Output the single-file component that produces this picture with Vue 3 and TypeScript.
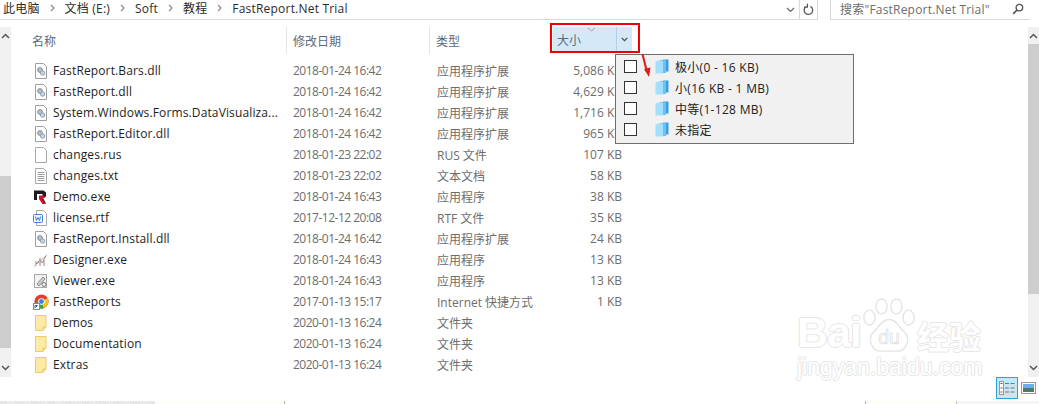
<template>
  <div class="explorer">
    <div class="topbar">
      <div class="address">
        <div class="crumbs">
          <template v-for="(c, i) in crumbs" :key="c">
            <span class="crumb">{{ c }}</span>
            <svg v-if="i < crumbs.length - 1" class="sep" width="5" height="8" viewBox="0 0 5 8"><path d="M1 1l3 3-3 3" fill="none" stroke="#8a8a8a" stroke-width="1.2" /></svg>
          </template>
        </div>
        <div class="addr-btn">
          <svg width="9" height="6" viewBox="0 0 9 6"><path d="M1 1l3.5 3.5L8 1" fill="none" stroke="#666" stroke-width="1.2" /></svg>
        </div>
        <div class="addr-btn refresh">
          <svg width="11" height="13" viewBox="0 0 11 13"><path d="M7.5 3.4A4.3 4.3 0 1 1 3 3.6M4.4 .8v3.4H1" fill="none" stroke="#555" stroke-width="1.3" /></svg>
        </div>
      </div>
      <div class="search">
        <span>搜索"FastReport.Net Trial"</span>
        <svg width="12" height="12" viewBox="0 0 12 12"><circle cx="7.4" cy="4.6" r="3.3" fill="none" stroke="#555" stroke-width="1.3" /><path d="M5 7L1.2 10.8" stroke="#555" stroke-width="1.7" /></svg>
      </div>
    </div>

    <div class="main">
      <div class="scrollbar">
        <svg width="9" height="6" viewBox="0 0 9 6"><path d="M1 5l3.5-3.5L8 5" fill="none" stroke="#555" stroke-width="1.5" /></svg>
        <div class="track"><div class="thumb left-thumb"></div></div>
        <svg width="9" height="6" viewBox="0 0 9 6"><path d="M1 1l3.5 3.5L8 1" fill="none" stroke="#555" stroke-width="1.5" /></svg>
      </div>

      <div class="list">
        <div class="head">
          <div class="col col-name">名称</div>
          <div class="col col-date">修改日期</div>
          <div class="col col-type">类型</div>
          <div class="col-size">
            <div class="size-cell">
              <svg class="sort" width="9" height="5" viewBox="0 0 9 5"><path d="M1 1l3.5 3L8 1" fill="none" stroke="#9aa7b3" /></svg>
              <span>大小</span>
              <div class="size-drop">
                <svg width="7" height="5" viewBox="0 0 7 5"><path d="M.7.8l2.8 2.8L6.3.8" fill="none" stroke="#444" stroke-width="1.1" /></svg>
              </div>
            </div>
          </div>
        </div>

        <div v-for="f in files" :key="f.name" class="row">
          <div class="name">
            <svg class="icon" width="16" height="16" viewBox="0 0 16 16">
              <template v-if="f.icon === 'dll'">
                <path d="M2.5 .5h8l3 3v12h-11z" fill="#fff" stroke="#a0a0a0" />
                <circle cx="7" cy="7" r="2.4" fill="#b8c0c8" stroke="#848c94" />
                <circle cx="9.6" cy="10" r="2.2" fill="#c9d6e4" stroke="#8ea0b2" />
              </template>
              <template v-else-if="f.icon === 'blank'">
                <path d="M2.5 .5h8l3 3v12h-11z" fill="#fff" stroke="#a8a8a8" />
              </template>
              <template v-else-if="f.icon === 'txt'">
                <path d="M2.5 .5h8l3 3v12h-11z" fill="#fff" stroke="#a8a8a8" />
                <path d="M4.5 4.5h7M4.5 6.5h7M4.5 8.5h7M4.5 10.5h7M4.5 12.5h7" stroke="#a0a0a0" />
              </template>
              <template v-else-if="f.icon === 'demo'">
                <path d="M1 1.5h9.5l2.500 2v4L10 9l3 5.5H9.5L7 10V8.5h2.5V5H4v6H1z" fill="#1c1c1c" />
                <path d="M6 6.5h5l1 2-3 1.5 4 5H9.5L6 10z" fill="#d3122a" />
              </template>
              <template v-else-if="f.icon === 'rtf'">
                <path d="M3.5 .5h7l3 3v12h-10z" fill="#fff" stroke="#a8a8a8" />
                <rect x=".5" y="4.5" width="9" height="8" rx="1" fill="#eef5ff" stroke="#3b82e0" />
                <path d="M2.5 6.5l1 4 1.5-3 1.5 3 1-4" fill="none" stroke="#3b82e0" />
              </template>
              <template v-else-if="f.icon === 'designer'">
                <path d="M1 14.5L14 3" stroke="#b0b0b0" />
                <path d="M2 14V9h2v5zM6 14V6h2v8zM10 14V8h2v6z" fill="#c4c4c4" />
                <path d="M3 12l4-4 2 3 4-7" fill="none" stroke="#c87a7a" />
              </template>
              <template v-else-if="f.icon === 'viewer'">
                <rect x="1.5" y="1.5" width="12" height="13" fill="#f2f2f2" stroke="#a8a8a8" />
                <path d="M4 11l6-7 2 2-6 7z" fill="#cfcfcf" stroke="#8a8a8a" />
                <circle cx="11" cy="11.5" r="2" fill="none" stroke="#777" />
              </template>
              <template v-else-if="f.icon === 'chrome'">
                <circle cx="8.5" cy="7.5" r="7" fill="#e23c2e" />
                <path d="M8.5 7.5L14.6 4a7 7 0 0 1-4 10z" fill="#f5c518" />
                <path d="M8.5 7.5l2 7a7 7 0 0 1-8-3.5L4 6z" fill="#2fa84f" />
                <circle cx="8.5" cy="7.5" r="3.3" fill="#fff" />
                <circle cx="8.5" cy="7.5" r="2.4" fill="#3f80e8" />
                <rect x=".5" y="9.5" width="6" height="6" fill="#fff" stroke="#8a8a8a" />
                <path d="M2 14v-2.5h2.5M4.500 11.5L2.5 13.5" fill="none" stroke="#2a5fbf" />
              </template>
              <template v-else>
                <path d="M2.5 .5h10.500v11.500l-3 3.500h-7.500z" fill="#fdeaa6" stroke="#efcd62" />
                <path d="M10 15.5V12h3" fill="#fdd96f" stroke="#efcd62" />
              </template>
            </svg>
            <span class="name-text">{{ f.name }}</span>
          </div>
          <div class="date">{{ f.date }}</div>
          <div class="type">{{ f.type }}</div>
          <div class="size">{{ f.size }}</div>
        </div>

        <div class="hilite"></div>
        <div class="popup">
          <div v-for="o in sizes" :key="o" class="opt">
            <span class="check"></span>
            <svg width="14" height="15" viewBox="0 0 14 15">
              <path d="M8 .5h5.5v12H8z" fill="#3a9fe0" />
              <path d="M5 1h6v13H5z" fill="#6cc0f2" />
              <path d="M.5 2.5Q4 1 8 2v12.5H.5z" fill="#a4e0fb" />
            </svg>
            <span class="opt-text">{{ o }}</span>
          </div>
        </div>
        <svg class="arrow" width="12" height="26" viewBox="0 0 12 26">
          <path d="M1.5 0L6 18" stroke="#e01919" stroke-width="2" />
          <path d="M3 15l6.500-1.500L8 23z" fill="#e01919" />
        </svg>
      </div>

      <div class="scrollbar">
        <svg width="9" height="6" viewBox="0 0 9 6"><path d="M1 5l3.5-3.5L8 5" fill="none" stroke="#555" stroke-width="1.5" /></svg>
        <div class="track"><div class="thumb right-thumb"></div></div>
        <svg width="9" height="6" viewBox="0 0 9 6"><path d="M1 1l3.5 3.5L8 1" fill="none" stroke="#555" stroke-width="1.5" /></svg>
      </div>
    </div>

    <div class="status">
      <div class="view active">
        <svg width="16" height="14" viewBox="0 0 16 14">
          <rect x=".5" y=".5" width="4" height="13" fill="#fff" stroke="#999" />
          <path d="M1.5 2.5h2M1.5 7h2" stroke="#555" />
          <path d="M1.5 11h2" stroke="#d22" />
          <path d="M6 2.5h4M11.5 2.5h4M6 7h4M11.5 7h4M6 11h4M11.5 11h4" stroke="#777" />
        </svg>
      </div>
      <div class="view picture">
        <svg width="15" height="12" viewBox="0 0 15 12">
          <rect x=".5" y=".5" width="14" height="11" fill="#fff" stroke="#999" />
          <rect x="2" y="2" width="11" height="4" fill="#6aaef0" />
          <path d="M2 6h11v4H2z" fill="#4d7a6c" />
        </svg>
      </div>
    </div>

    <div class="strip">
      <div class="s-hatch"></div>
      <div class="s-cream s1"></div>
      <div class="s-white"></div>
      <div class="s-cream s2"></div>
      <div class="s-grey"></div>
    </div>

    <div class="mark">
      <div class="mark-top">
        <span class="mark-bai">Bai</span>
        <svg class="paw" width="54" height="56" viewBox="0 0 58 58">
          <g fill="#fff" stroke="#e4e4e4" stroke-width="1.5">
            <ellipse cx="8" cy="20" rx="6" ry="8" />
            <ellipse cx="21" cy="8" rx="6" ry="8" />
            <ellipse cx="37" cy="8" rx="6" ry="8" />
            <ellipse cx="50" cy="20" rx="6" ry="8" />
            <path d="M29 22c8 0 11 9 17 14 6 6 2 20-8 20H20C10 56 6 42 12 36c6-5 9-14 17-14z" />
          </g>
          <text x="29" y="48" class="paw-text">du</text>
        </svg>
        <span class="mark-cn">经验</span>
      </div>
      <div class="mark-url">jingyan.baidu.com</div>
    </div>
  </div>
</template>

<script setup lang="ts">
interface FileRow {
  name: string
  date: string
  type: string
  size: string
  icon: string
}

const crumbs = ['此电脑', '文档 (E:)', 'Soft', '教程', 'FastReport.Net Trial']
const sizes = ['极小(0 - 16 KB)', '小(16 KB - 1 MB)', '中等(1-128 MB)', '未指定']

const files: FileRow[] = [
  { name: 'FastReport.Bars.dll', date: '2018-01-24 16:42', type: '应用程序扩展', size: '5,086 KB', icon: 'dll' },
  { name: 'FastReport.dll', date: '2018-01-24 16:42', type: '应用程序扩展', size: '4,629 KB', icon: 'dll' },
  { name: 'System.Windows.Forms.DataVisualiza...', date: '2018-01-24 16:42', type: '应用程序扩展', size: '1,716 KB', icon: 'dll' },
  { name: 'FastReport.Editor.dll', date: '2018-01-24 16:42', type: '应用程序扩展', size: '965 KB', icon: 'dll' },
  { name: 'changes.rus', date: '2018-01-23 22:02', type: 'RUS 文件', size: '107 KB', icon: 'blank' },
  { name: 'changes.txt', date: '2018-01-23 22:02', type: '文本文档', size: '58 KB', icon: 'txt' },
  { name: 'Demo.exe', date: '2018-01-24 16:43', type: '应用程序', size: '38 KB', icon: 'demo' },
  { name: 'license.rtf', date: '2017-12-12 20:08', type: 'RTF 文件', size: '35 KB', icon: 'rtf' },
  { name: 'FastReport.Install.dll', date: '2018-01-24 16:42', type: '应用程序扩展', size: '24 KB', icon: 'dll' },
  { name: 'Designer.exe', date: '2018-01-24 16:43', type: '应用程序', size: '13 KB', icon: 'designer' },
  { name: 'Viewer.exe', date: '2018-01-24 16:43', type: '应用程序', size: '13 KB', icon: 'viewer' },
  { name: 'FastReports', date: '2017-01-13 15:17', type: 'Internet 快捷方式', size: '1 KB', icon: 'chrome' },
  { name: 'Demos', date: '2020-01-13 16:24', type: '文件夹', size: '', icon: 'folder' },
  { name: 'Documentation', date: '2020-01-13 16:24', type: '文件夹', size: '', icon: 'folder' },
  { name: 'Extras', date: '2020-01-13 16:24', type: '文件夹', size: '', icon: 'folder' }
]
</script>

<style scoped>
.explorer {
  position: relative;
  display: flex;
  flex-direction: column;
  width: 1039px;
  height: 404px;
  overflow: hidden;
  background: #fff;
  font-family: "Open Sans", "Noto Sans CJK SC", sans-serif;
  font-size: 12px;
  color: #1e1e1e;
}
.topbar {
  display: flex;
  height: 20px;
  flex: none;
}
.address {
  display: flex;
  width: 818px;
  border-bottom: 1px solid #d9d9d9;
}
.crumbs {
  flex: 1;
  display: flex;
  align-items: center;
  gap: 10px;
  padding-left: 3px;
  padding-bottom: 3px;
  color: #2b2b2b;
  letter-spacing: 0.2px;
}
.addr-btn {
  width: 17px;
  display: flex;
  align-items: center;
  justify-content: center;
}
.refresh {
  border-left: 1px solid #d9d9d9;
  border-right: 1px solid #d9d9d9;
}
.search {
  margin-left: 12px;
  width: 200px;
  display: flex;
  align-items: center;
  justify-content: space-between;
  padding: 0 6px 2px 9px;
  box-sizing: border-box;
  border-left: 1px solid #d9d9d9;
  border-bottom: 1px solid #d9d9d9;
  color: #6d6d6d;
  letter-spacing: 0.2px;
}
.main {
  display: flex;
  margin-top: 7px;
  height: 350px;
  flex: none;
}
.scrollbar {
  width: 11px;
  flex: none;
  display: flex;
  flex-direction: column;
  align-items: center;
  background: #f0f0f0;
  padding: 6px 0;
  box-sizing: border-box;
  gap: 6px;
}
.track {
  flex: 1;
  width: 100%;
  position: relative;
}
.thumb {
  position: absolute;
  left: 0;
  right: 0;
  background: #cdcdcd;
}
.left-thumb {
  top: 131px;
  height: 172px;
}
.right-thumb {
  top: -1px;
  height: 250px;
}
.list {
  position: relative;
  flex: 1;
}
.head {
  display: flex;
  height: 28px;
  margin-bottom: 5px;
  color: #5b6b7c;
}
.col {
  height: 27px;
  display: flex;
  align-items: center;
  box-sizing: border-box;
  border-right: 1px solid #e5e5e5;
}
.col-name {
  width: 276px;
  padding-left: 21px;
}
.col-date {
  width: 143px;
  padding-left: 6px;
}
.col-type {
  width: 123px;
  padding-left: 6px;
  border-right: none;
}
.col-size {
  width: 79px;
}
.size-cell {
  position: relative;
  display: flex;
  align-items: center;
  height: 24px;
  padding-left: 4px;
  background: #d5e8f7;
  box-sizing: border-box;
}
.sort {
  position: absolute;
  left: 34px;
  top: 0;
}
.size-cell span {
  padding-top: 2px;
}
.size-drop {
  position: absolute;
  right: 0;
  top: 0;
  bottom: 0;
  width: 15px;
  display: flex;
  align-items: center;
  justify-content: center;
  border-left: 1px solid #b5cfe4;
}
.row {
  display: flex;
  height: 21px;
  align-items: center;
  color: #6d6d6d;
}
.name {
  width: 276px;
  display: flex;
  align-items: center;
  padding-left: 22px;
  box-sizing: border-box;
  color: #1e1e1e;
  gap: 4px;
  letter-spacing: 0.13px;
}
.icon {
  flex: none;
}
.date {
  width: 143px;
  padding-left: 6px;
  box-sizing: border-box;
  letter-spacing: -0.5px;
}
.type {
  width: 116px;
  padding-left: 7px;
  box-sizing: border-box;
}
.size {
  width: 76px;
  text-align: right;
}
.hilite {
  position: absolute;
  left: 539px;
  top: -4px;
  width: 90px;
  height: 30px;
  border: 2px solid #f00000;
  box-sizing: border-box;
}
.popup {
  position: absolute;
  left: 604px;
  top: 27px;
  width: 239px;
  height: 90px;
  padding: 1px 0;
  box-sizing: border-box;
  background: #f1f1f1;
  border: 1px solid #6e6e6e;
}
.opt {
  display: flex;
  align-items: center;
  height: 21px;
  padding-left: 8px;
}
.check {
  width: 11px;
  height: 11px;
  border: 1px solid #333;
  background: #fff;
  margin-right: 18px;
  flex: none;
}
.opt-text {
  margin-left: 6px;
  color: #222;
  letter-spacing: 0.3px;
}
.arrow {
  position: absolute;
  left: 630px;
  top: 27px;
}
.status {
  height: 24px;
  flex: none;
  display: flex;
  justify-content: flex-end;
  align-items: flex-start;
  gap: 3px;
  padding-right: 3px;
}
.view {
  height: 22px;
  box-sizing: border-box;
  display: flex;
  align-items: center;
  justify-content: center;
}
.active {
  width: 22px;
  background: #c9e6f5;
  border: 1px solid #2ea0d8;
}
.picture {
  width: 15px;
}
.strip {
  height: 3px;
  display: flex;
  flex: none;
}
.s-hatch {
  width: 155px;
  background: repeating-linear-gradient(45deg, #e2e2e2 0 1px, #efefef 1px 2px);
}
.s-cream {
  background: #fdfdf2;
}
.s1 {
  width: 129px;
  border-right: 1px solid #b0b0b0;
}
.s-white {
  width: 580px;
  border-right: 1px solid #b0b0b0;
}
.s2 {
  width: 90px;
  border-right: 1px solid #c0c0c0;
}
.s-grey {
  flex: 1;
  background: #f5f5f5;
}
.mark {
  position: absolute;
  left: 797px;
  top: 298px;
  width: 200px;
  pointer-events: none;
}
.mark-top {
  display: flex;
  align-items: flex-end;
  height: 56px;
}
.mark-bai,
.mark-url,
.mark-cn {
  color: #fff;
  font-family: "Liberation Sans", "Noto Sans CJK SC", sans-serif;
  text-shadow: 1px 0 #e6e6e6, -1px 0 #e6e6e6, 0 1px #e6e6e6, 0 -1px #e6e6e6;
  line-height: 1;
}
.mark-bai {
  font-size: 43px;
  font-weight: 700;
  letter-spacing: -1px;
  width: 65px;
}
.paw {
  flex: none;
}
.paw-text {
  font-family: "Liberation Sans", sans-serif;
  font-size: 21px;
  text-anchor: middle;
  fill: #fff;
  stroke: #dedede;
  stroke-width: 0.8px;
}
.mark-cn {
  font-size: 32px;
  font-weight: 700;
  padding-left: 1px;
}
.mark-url {
  font-size: 23px;
  line-height: 26px;
  white-space: nowrap;
}
</style>
